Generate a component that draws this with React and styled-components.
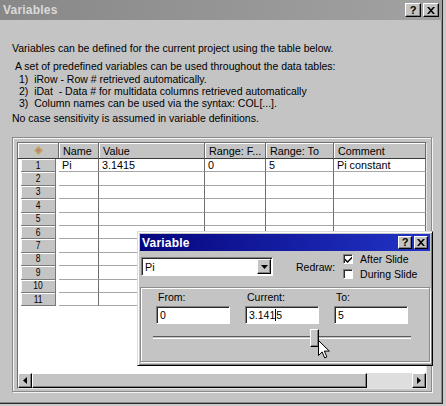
import React from 'react'
import styled, { createGlobalStyle } from 'styled-components'

const GlobalStyle = createGlobalStyle`
  html, body {
    margin: 0;
    padding: 0;
    background: #c9c9c9;
  }
  body {
    font-family: "Liberation Sans", Arial, sans-serif;
    font-size: 10.5px;
    color: #000;
  }
`

const columns = [
    { title: 'Name', width: 40 },
    { title: 'Value', width: 106 },
    { title: 'Range: F...', width: 61 },
    { title: 'Range: To', width: 68 },
    { title: 'Comment', width: 92 },
]

const rows = [
    ['Pi', '3.1415', '0', '5', 'Pi constant'],
    ...Array.from({ length: 10 }, () => ['', '', '', '', '']),
]

const colTemplate = `41px ${columns.map(c => c.width + 'px').join(' ')}`

function CloseGlyph({ size = 8 }) {
    return (
        <svg width={size} height={size - 1} viewBox="0 0 8 7">
            <path d="M0 0h2l2 2.3L6 0h2L5 3.5 8 7H6L4 4.7 2 7H0l3-3.5z" fill="#000" />
        </svg>
    )
}

function Arrow({ dir }) {
    return (
        <svg width="4" height="7" viewBox="0 0 4 7">
            {dir === 'left'
                ? <path d="M4 0v7L0 3.5z" fill="#000" />
                : <path d="M0 0v7l4-3.5z" fill="#000" />}
        </svg>
    )
}

function App() {
    return (
        <>
            <GlobalStyle />
            <Window>
                <TitleBar>
                    <TitleText>Variables</TitleText>
                    <CaptionButtons>
                        <CaptionButton $w={16} $h={14}>?</CaptionButton>
                        <CaptionButton $w={16} $h={14}><CloseGlyph /></CaptionButton>
                    </CaptionButtons>
                </TitleBar>

                <Body>
                    <Intro>
                        <Para>Variables can be defined for the current project using the table below.</Para>
                        <Para $top={6} $indent={3}>A set of predefined variables can be used throughout the data tables:</Para>
                        <List>
                            <li>1)&nbsp; iRow - Row # retrieved automatically.</li>
                            <li>2)&nbsp; iDat&nbsp; - Data # for multidata columns retrieved automatically</li>
                            <li>3)&nbsp; Column names can be used via the syntax: COL[...].</li>
                        </List>
                        <Para $top={3}>No case sensitivity is assumed in variable definitions.</Para>
                    </Intro>

                    <GroupFrame>
                        <Grid>
                            <GridRow $h={16}>
                                <CornerCell>
                                    <svg width="9" height="9" viewBox="0 0 9 9">
                                        <path d="M4.5 0L9 4.5 4.5 9 0 4.5z" fill="#b9a85a" />
                                        <path d="M4.5 2.3L6.7 4.5 4.5 6.7 2.3 4.5z" fill="#c77a8e" />
                                    </svg>
                                </CornerCell>
                                {columns.map(c => <HeaderCell key={c.title}>{c.title}</HeaderCell>)}
                            </GridRow>
                            {rows.map((r, i) => (
                                <GridRow key={i} $h={13.4}>
                                    <RowHead>{i + 1}</RowHead>
                                    {r.map((v, j) => <Cell key={j}>{v}</Cell>)}
                                </GridRow>
                            ))}
                            <Filler />
                            <ScrollBar>
                                <ScrollButton><Arrow dir="left" /></ScrollButton>
                                <ScrollThumb />
                                <ScrollTrack />
                                <ScrollButton><Arrow dir="right" /></ScrollButton>
                            </ScrollBar>
                        </Grid>
                    </GroupFrame>
                </Body>

                <Dialog>
                    <DialogTitle>
                        <TitleText $active>Variable</TitleText>
                        <CaptionButtons>
                            <CaptionButton $w={14} $h={13}>?</CaptionButton>
                            <CaptionButton $w={14} $h={13}><CloseGlyph /></CaptionButton>
                        </CaptionButtons>
                    </DialogTitle>
                    <DialogBody>
                        <TopRow>
                            <Combo>
                                <ComboText>Pi</ComboText>
                                <ComboButton>
                                    <svg width="7" height="4" viewBox="0 0 7 4"><path d="M0 0h7L3.5 4z" fill="#000" /></svg>
                                </ComboButton>
                            </Combo>
                            <RedrawLabel>Redraw:</RedrawLabel>
                            <CheckList>
                                <CheckRow>
                                    <CheckBox>
                                        <svg width="7" height="7" viewBox="0 0 7 7">
                                            <path d="M0 2.5l2.5 2.5L7 0.5v2L2.5 7 0 4.5z" fill="#000" />
                                        </svg>
                                    </CheckBox>
                                    After Slide
                                </CheckRow>
                                <CheckRow>
                                    <CheckBox />
                                    During Slide
                                </CheckRow>
                            </CheckList>
                        </TopRow>

                        <FieldsPanel>
                            <Fields>
                                <Field>
                                    <FieldLabel>From:</FieldLabel>
                                    <Input>0</Input>
                                </Field>
                                <Field>
                                    <FieldLabel>Current:</FieldLabel>
                                    <Input>3.141<Caret />5</Input>
                                </Field>
                                <Field>
                                    <FieldLabel>To:</FieldLabel>
                                    <Input>5</Input>
                                </Field>
                            </Fields>
                            <Slider>
                                <SliderTrack />
                                <SliderThumb style={{ left: `${0.63 * 249}px` }} />
                            </Slider>
                        </FieldsPanel>
                    </DialogBody>
                </Dialog>

                <Pointer width="12" height="19" viewBox="0 0 12 19">
                    <path d="M0.5 0.5v15l3.6-3.6 2.6 6 2.2-1-2.6-5.8h5z" fill="#fff" stroke="#000" strokeWidth="1" />
                </Pointer>
            </Window>
        </>
    )
}

const raised = `
    border: 1px solid;
    border-color: #fff #000 #000 #fff;
    box-shadow: inset -1px -1px 0 #808080;
`

const sunken = `
    border: 1px solid;
    border-color: #808080 #fff #fff #808080;
    box-shadow: inset 1px 1px 0 #2a2a2a;
`

const Window = styled.div`
    position: relative;
    width: 443px;
    height: 404px;
    box-sizing: border-box;
    background: #c4c4c4;
    border-right: 1px solid #2a2a2a;
    border-bottom: 1px solid #2a2a2a;
    box-shadow: inset -1px -1px 0 #8a8a8a;
    overflow: hidden;
`

const TitleBar = styled.div`
    height: 20px;
    display: flex;
    align-items: center;
    justify-content: space-between;
    padding: 0 3px 0 3px;
    background: linear-gradient(90deg, #888888, #a2a2a2);
`

const TitleText = styled.span`
    font-size: 12px;
    font-weight: bold;
    letter-spacing: 0.2px;
    color: ${p => (p.$active ? '#fff' : '#dadada')};
`

const CaptionButtons = styled.div`
    display: flex;
    gap: 2px;
`

const CaptionButton = styled.span`
    width: ${p => p.$w}px;
    height: ${p => p.$h}px;
    box-sizing: border-box;
    display: flex;
    align-items: center;
    justify-content: center;
    background: #c4c4c4;
    font-size: 11px;
    font-weight: bold;
    line-height: 1;
    ${raised}
`

const Body = styled.div`
    padding: 22px 0 0 12px;
`

const Intro = styled.div`
    line-height: 12px;
`

const Para = styled.p`
    margin: ${p => p.$top || 0}px 0 0 ${p => p.$indent || 0}px;
`

const List = styled.ul`
    list-style: none;
    margin: 1px 0 0;
    padding: 0 0 0 7px;
`

const GroupFrame = styled.div`
    margin-top: 13px;
    width: 420px;
    height: 255px;
    box-sizing: border-box;
    padding: 4px;
    border: 1px solid #8a8a8a;
    box-shadow: inset 1px 1px 0 #f4f4f4, 1px 1px 0 #f4f4f4;
`

const Grid = styled.div`
    width: 410px;
    height: 247px;
    box-sizing: border-box;
    display: flex;
    flex-direction: column;
    background: #fff;
    border: 1px solid;
    border-color: #6e6e6e #e6e6e6 #e6e6e6 #6e6e6e;
`

const GridRow = styled.div`
    display: grid;
    grid-template-columns: ${colTemplate};
    height: ${p => p.$h}px;
    flex: none;
`

const CornerCell = styled.div`
    display: flex;
    align-items: center;
    justify-content: center;
    background: #c4c4c4;
    border-right: 1px solid #6a6a6a;
    border-bottom: 1px solid #3a3a3a;
    box-shadow: inset 1px 1px 0 #fff;
`

const HeaderCell = styled.div`
    display: flex;
    align-items: center;
    padding-left: 4px;
    background: #c4c4c4;
    border-right: 1px solid #6a6a6a;
    border-bottom: 1px solid #3a3a3a;
    box-shadow: inset 1px 1px 0 #fff;
    white-space: nowrap;
    overflow: hidden;
    font-size: 10.8px;
`

const RowHead = styled.div`
    display: flex;
    align-items: center;
    justify-content: center;
    background: #c4c4c4;
    border-right: 1px solid #6a6a6a;
    border-bottom: 1px solid #7a7a7a;
    box-shadow: inset 1px 1px 0 #fff;
    font-size: 10px;
    transform: scaleX(0.85);
    transform-origin: center;
`

const Cell = styled.div`
    display: flex;
    align-items: center;
    padding-left: 3px;
    border-right: 1px solid #6e6e6e;
    border-bottom: 1px solid #a6a6a6;
    white-space: nowrap;
    overflow: hidden;
    font-size: 10.8px;
`

const Filler = styled.div`
    flex: 1;
    background: #fff;
`

const ScrollBar = styled.div`
    flex: none;
    height: 15px;
    display: grid;
    grid-template-columns: 14px 335px 1fr 14px;
`

const ScrollButton = styled.div`
    box-sizing: border-box;
    display: flex;
    align-items: center;
    justify-content: center;
    background: #c4c4c4;
    ${raised}
`

const ScrollThumb = styled.div`
    box-sizing: border-box;
    background: #c4c4c4;
    ${raised}
`

const ScrollTrack = styled.div`
    background: #dedede;
`

const Dialog = styled.div`
    position: absolute;
    left: 137px;
    top: 231px;
    width: 296px;
    height: 135px;
    box-sizing: border-box;
    padding: 2px;
    display: flex;
    flex-direction: column;
    background: #c4c4c4;
    border: 1px solid;
    border-color: #dcdcdc #000 #000 #dcdcdc;
    box-shadow: inset 1px 1px 0 #fff, inset -1px -1px 0 #808080;
`

const DialogTitle = styled.div`
    height: 17px;
    flex: none;
    display: flex;
    align-items: center;
    justify-content: space-between;
    padding: 0 2px 0 2px;
    background: linear-gradient(90deg, #06067e, #2234c6);
`

const DialogBody = styled.div`
    flex: 1;
    display: flex;
    flex-direction: column;
`

const TopRow = styled.div`
    height: 31px;
    display: flex;
    align-items: center;
`

const Combo = styled.div`
    margin-left: 1px;
    width: 132px;
    height: 19px;
    box-sizing: border-box;
    display: flex;
    align-items: center;
    justify-content: space-between;
    padding: 0 1px 0 3px;
    background: #fff;
    ${sunken}
`

const ComboText = styled.span`
    font-size: 10.8px;
`

const ComboButton = styled.span`
    width: 14px;
    height: 15px;
    box-sizing: border-box;
    display: flex;
    align-items: center;
    justify-content: center;
    background: #c4c4c4;
    ${raised}
`

const RedrawLabel = styled.span`
    margin-left: 23px;
`

const CheckList = styled.div`
    margin-left: 8px;
    display: flex;
    flex-direction: column;
    gap: 5px;
`

const CheckRow = styled.label`
    display: flex;
    align-items: center;
    gap: 7px;
    height: 10px;
    font-size: 10.5px;
`

const CheckBox = styled.span`
    width: 10px;
    height: 10px;
    box-sizing: border-box;
    display: flex;
    align-items: center;
    justify-content: center;
    background: #fff;
    ${sunken}
`

const FieldsPanel = styled.div`
    margin-top: 5px;
    height: 75px;
    box-sizing: border-box;
    padding-top: 3px;
    border: 1px solid #8c8c8c;
    box-shadow: inset 1px 1px 0 #fff, 1px 1px 0 #fff;
`

const Fields = styled.div`
    display: grid;
    grid-template-columns: repeat(3, 74px);
    column-gap: 15px;
    padding-left: 15px;
`

const Field = styled.div`
    display: flex;
    flex-direction: column;
    gap: 3px;
`

const FieldLabel = styled.span`
    padding-left: 2px;
    line-height: 12px;
`

const Input = styled.div`
    height: 18px;
    box-sizing: border-box;
    display: flex;
    align-items: center;
    padding-left: 3px;
    background: #fff;
    font-size: 10.5px;
    ${sunken}
`

const Caret = styled.span`
    display: inline-block;
    width: 1px;
    height: 12px;
    background: #000;
`

const Slider = styled.div`
    position: relative;
    margin: 5px 0 0 12px;
    width: 258px;
    height: 18px;
`

const SliderTrack = styled.div`
    position: absolute;
    left: 0;
    right: 0;
    top: 7px;
    height: 1px;
    border-top: 1px solid #5a5a5a;
    border-bottom: 1px solid #fff;
`

const SliderThumb = styled.div`
    position: absolute;
    top: 0;
    width: 9px;
    height: 18px;
    box-sizing: border-box;
    background: #c4c4c4;
    ${raised}
`

const Pointer = styled.svg`
    position: absolute;
    left: 318px;
    top: 340px;
`

export default App
